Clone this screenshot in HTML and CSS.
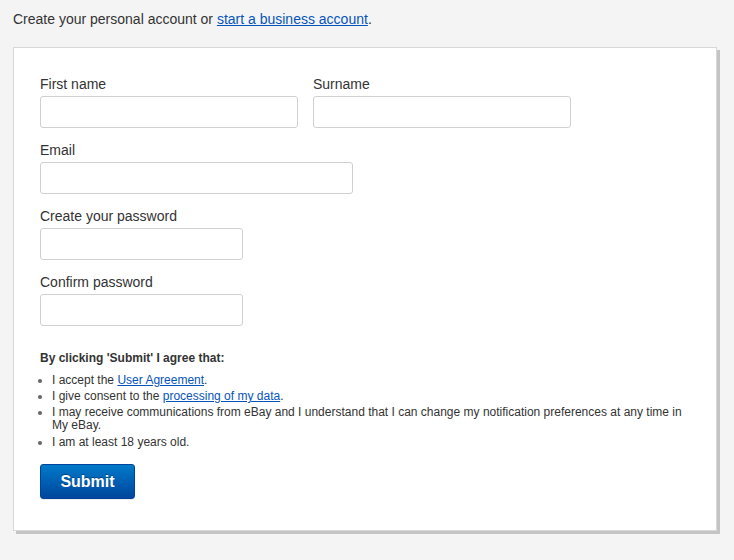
FILE: index.html
```html
<!DOCTYPE html>
<html lang="en">
<head>
<meta charset="utf-8">
<title>Register</title>
<link rel="stylesheet" href="styles.css">
</head>
<body>
<div class="page">
  <p class="intro">Create your personal account or <a href="#">start a business account</a>.</p>
  <form class="card">
    <div class="row">
      <div class="field">
        <label class="label">First name</label>
        <input class="input w-half" type="text">
      </div>
      <div class="field">
        <label class="label">Surname</label>
        <input class="input w-half" type="text">
      </div>
    </div>
    <div class="field">
      <label class="label">Email</label>
      <input class="input w-email" type="text">
    </div>
    <div class="field">
      <label class="label">Create your password</label>
      <input class="input w-pass" type="password">
    </div>
    <div class="field">
      <label class="label">Confirm password</label>
      <input class="input w-pass" type="password">
    </div>
    <p class="agree-title">By clicking 'Submit' I agree that:</p>
    <ul class="agree-list">
      <li>I accept the <a href="#">User Agreement</a>.</li>
      <li>I give consent to the <a href="#">processing of my data</a>.</li>
      <li>I may receive communications from eBay and I understand that I can change my notification preferences at any time in My eBay.</li>
      <li>I am at least 18 years old.</li>
    </ul>
    <button class="submit" type="button">Submit</button>
  </form>
</div>
</body>
</html>
```
FILE: styles.css
```css
html, body {
  margin: 0;
  padding: 0;
}
body {
  background: #f4f4f4;
  font-family: "Liberation Sans", Arial, sans-serif;
  color: #333;
}
.page {
  padding: 10px 13px;
}
.intro {
  margin: 0;
  font-size: 14px;
  line-height: 18px;
  color: #333;
}
a {
  color: #0654ba;
  text-decoration: underline;
}
.card {
  margin-top: 19px;
  width: 650px;
  background: #fff;
  border: 1px solid #d8d8d8;
  box-shadow: 3px 3px 0 #c4c4c4;
  padding: 27px 26px 31px 26px;
  display: flex;
  flex-direction: column;
}
.row {
  display: flex;
  gap: 15px;
}
.field {
  display: flex;
  flex-direction: column;
  margin-bottom: 13px;
}
.label {
  font-size: 14px;
  line-height: 18px;
  margin-bottom: 3px;
  color: #333;
}
.input {
  box-sizing: border-box;
  height: 32px;
  border: 1px solid #d0d0d0;
  border-radius: 3px;
  background: #fff;
  margin: 0;
  padding: 0 6px;
}
.w-half { width: 258px; }
.w-email { width: 313px; }
.w-pass { width: 203px; }
.agree-title {
  margin: 12px 0 8px 0;
  font-size: 12px;
  line-height: 15px;
  font-weight: bold;
  color: #333;
}
.agree-list {
  margin: 0;
  padding: 0 0 0 12px;
  font-size: 12px;
  line-height: 13px;
  color: #333;
}
.agree-list li {
  margin-bottom: 3px;
}
.agree-list li:last-child {
  margin-top: 4px;
}
.agree-list li::marker {
  color: #666;
}
.submit {
  margin-top: 12px;
  align-self: flex-start;
  width: 95px;
  height: 35px;
  border: 1px solid #004499;
  border-radius: 3px;
  background: linear-gradient(#0079c9, #00469c);
  color: #fff;
  font-family: "Liberation Sans", Arial, sans-serif;
  font-size: 16px;
  font-weight: bold;
  text-shadow: 0 -1px 0 rgba(0,0,0,0.35);
  box-shadow: 0 1px 1px rgba(0,0,0,0.08);
  padding: 0;
  cursor: pointer;
}
```
